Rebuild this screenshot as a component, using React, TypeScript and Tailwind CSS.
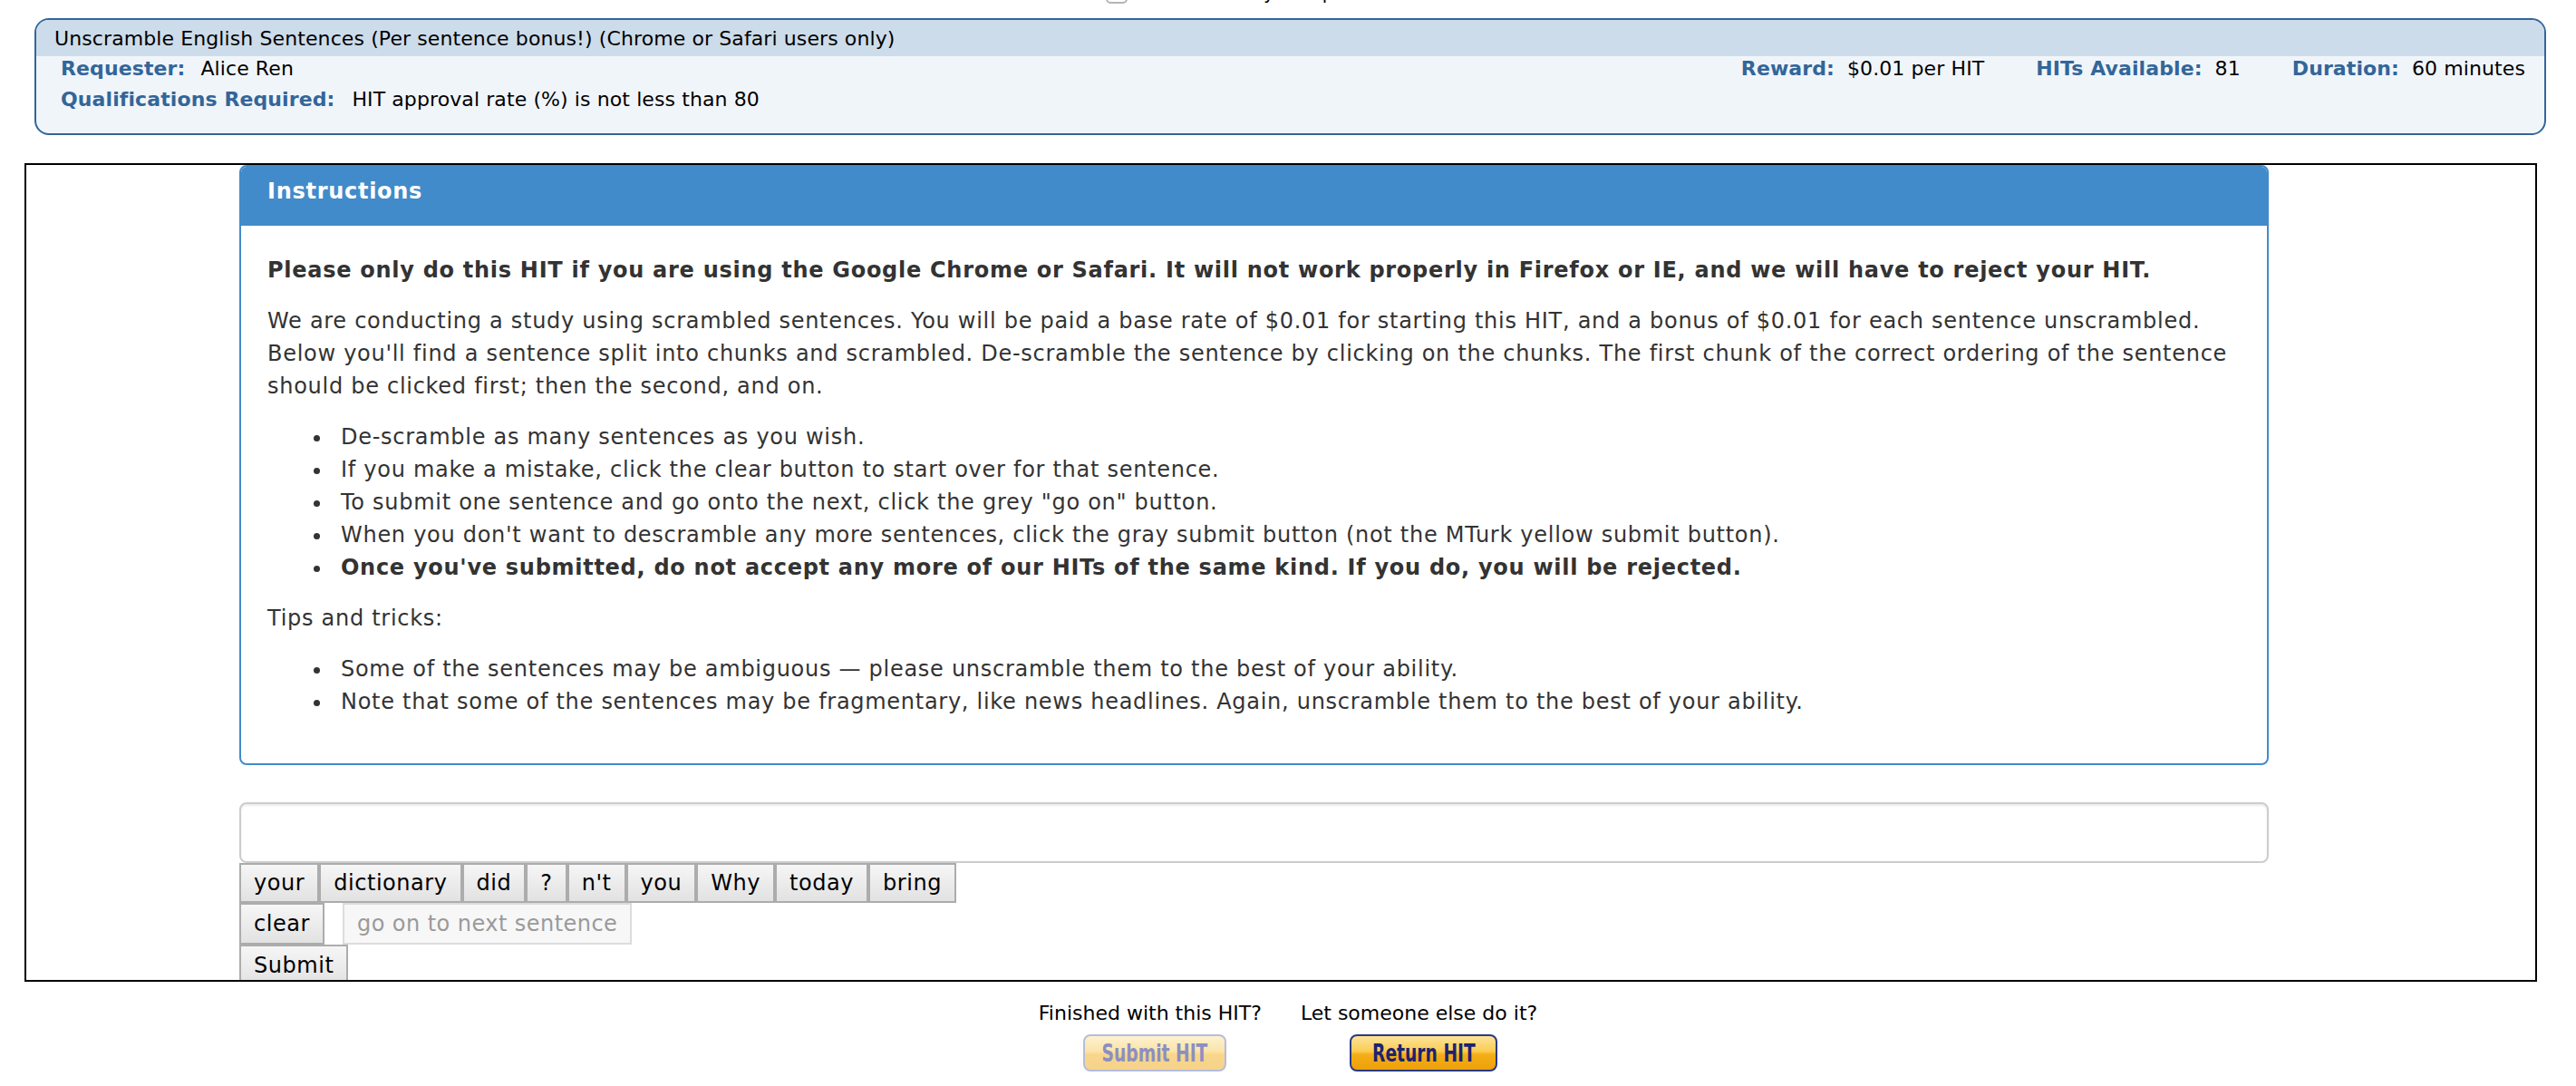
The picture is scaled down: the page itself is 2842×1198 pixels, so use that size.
const chunks = ["your", "dictionary", "did", "?", "n't", "you", "Why", "today", "bring"];

const rules = [
  "De-scramble as many sentences as you wish.",
  "If you make a mistake, click the clear button to start over for that sentence.",
  'To submit one sentence and go onto the next, click the grey "go on" button.',
  "When you don't want to descramble any more sentences, click the gray submit button (not the MTurk yellow submit button).",
];

const tips = [
  "Some of the sentences may be ambiguous — please unscramble them to the best of your ability.",
  "Note that some of the sentences may be fragmentary, like news headlines. Again, unscramble them to the best of your ability.",
];

function ChunkButton({ label, tall }: { label: string; tall?: boolean }) {
  return (
    <button
      className={`${tall ? "h-[46px]" : "h-[44px]"} px-[14px] border-2 border-[#acacac] bg-gradient-to-b from-[#f6f6f6] to-[#e2e2e2] text-[24px] leading-[28px] tracking-[0.55px] text-black`}
    >
      {label}
    </button>
  );
}

function Bullet({ children, bold }: { children: React.ReactNode; bold?: boolean }) {
  return (
    <li className={`flex ${bold ? "font-bold" : ""}`}>
      <span className="w-[30px] h-[36px] shrink-0 flex items-center">
        <span className="w-[7px] h-[7px] mt-[3px] rounded-full bg-[#333333]" />
      </span>
      <span>{children}</span>
    </li>
  );
}

function HitInfo() {
  return (
    <div className="ml-[38px] w-[2771px] border-2 border-[#336699] rounded-[16px] overflow-hidden bg-[#f0f5fa] text-[22px] tracking-[0.1px] text-black">
      {/* Title strip */}
      <div className="h-[40px] bg-[#cddcea] flex items-center pl-[20px]">
        Unscramble English Sentences (Per sentence bonus!) (Chrome or Safari users only)
      </div>

      <div className="flex justify-between pl-[27px] pr-[21px] mt-[2px] leading-[24px]">
        <div>
          <span className="font-bold text-[#336699]">Requester:</span>
          <span className="ml-[17px]">Alice Ren</span>
        </div>
        <div className="flex gap-[57px]">
          <div>
            <span className="font-bold text-[#336699]">Reward:</span>
            <span className="ml-[14px]">$0.01 per HIT</span>
          </div>
          <div>
            <span className="font-bold text-[#336699]">HITs Available:</span>
            <span className="ml-[14px]">81</span>
          </div>
          <div>
            <span className="font-bold text-[#336699]">Duration:</span>
            <span className="ml-[14px]">60 minutes</span>
          </div>
        </div>
      </div>

      <div className="pl-[27px] mt-[10px] mb-[25px] leading-[24px]">
        <span className="font-bold text-[#336699]">Qualifications Required:</span>
        <span className="ml-[19px]">HIT approval rate (%) is not less than 80</span>
      </div>
    </div>
  );
}

function Instructions() {
  return (
    <div className="w-[2239px] border-2 border-[#428bca] rounded-[8px] overflow-hidden text-[24px] leading-[36px] tracking-[0.72px] text-[#333333]">
      <div className="h-[65px] bg-[#428bca] pl-[29px] pt-[9px] font-bold text-white">Instructions</div>
      <div className="pl-[29px] pt-[31px] pb-[30px] whitespace-nowrap">
        <p className="font-bold mb-[20px]">
          Please only do this HIT if you are using the Google Chrome or Safari. It will not work properly in
          Firefox or IE, and we will have to reject your HIT.
        </p>
        <p className="mb-[20px]">
          We are conducting a study using scrambled sentences. You will be paid a base rate of $0.01 for starting
          this HIT, and a bonus of $0.01 for each sentence unscrambled.
          <br />
          Below you'll find a sentence split into chunks and scrambled. De-scramble the sentence by clicking on the
          chunks. The first chunk of the correct ordering of the sentence
          <br />
          should be clicked first; then the second, and on.
        </p>
        <ul className="pl-[51px] mb-[20px]">
          {rules.map((r) => (
            <Bullet key={r}>{r}</Bullet>
          ))}
          <Bullet bold>
            Once you've submitted, do not accept any more of our HITs of the same kind. If you do, you will be
            rejected.
          </Bullet>
        </ul>
        <p className="mb-[20px]">Tips and tricks:</p>
        <ul className="pl-[51px] mb-[20px]">
          {tips.map((t) => (
            <Bullet key={t}>{t}</Bullet>
          ))}
        </ul>
      </div>
    </div>
  );
}

export default function App() {
  return (
    <div className="min-h-screen bg-white font-['DejaVu_Sans','Open_Sans',sans-serif]">
      {/* auto-accept row, mostly scrolled out of view */}
      <div className="h-[20px] flex items-start pl-[1220px] overflow-hidden">
        <div className="-mt-[20px] flex items-end gap-[24px] text-[20px] leading-[24px] text-black">
          <span className="w-[24px] h-[24px] rounded-[5px] border-2 border-[#b5b5b5] bg-white" />
          <span>Automatically accept the next HIT</span>
        </div>
      </div>

      <HitInfo />

      {/* HIT frame */}
      <div className="mt-[31px] ml-[27px] w-[2772px] h-[903px] border-2 border-black overflow-hidden">
        <div className="ml-[235px]">
          <Instructions />

          <div className="mt-[41px] w-[2239px] h-[67px] border-2 border-[#cccccc] rounded-[8px] shadow-[inset_0_2px_2px_rgba(0,0,0,0.075)]" />

          <div className="flex">
            {chunks.map((c) => (
              <ChunkButton key={c} label={c} />
            ))}
          </div>

          <div className="flex">
            <ChunkButton label="clear" tall />
            <button className="ml-[20px] h-[46px] px-[14px] border-2 border-[#dcdcdc] bg-[#f7f7f7] text-[24px] leading-[28px] tracking-[0.45px] text-[#9a9a9a]">
              go on to next sentence
            </button>
          </div>

          <div className="flex">
            <ChunkButton label="Submit" tall />
          </div>
        </div>
      </div>

      {/* Submit / return */}
      <div className="flex justify-center gap-[43px] mt-[22px] text-[22px] leading-[26px] text-black">
        <div className="flex flex-col items-center">
          <span>Finished with this HIT?</span>
          <button className="mt-[10px] ml-[10px] w-[158px] h-[41px] rounded-[8px] border-2 border-[#b5bddb] bg-[linear-gradient(to_bottom,#fdf1d0_0%,#fbe4a8_45%,#f8d68a_55%,#f6d28c_100%)] font-bold text-[#8c8fc2]">
            <span className="inline-block scale-x-[0.77] text-[27px] leading-[30px] font-['DejaVu_Sans_Condensed','DejaVu_Sans',sans-serif] whitespace-nowrap">
              Submit HIT
            </span>
          </button>
        </div>
        <div className="flex flex-col items-center">
          <span>Let someone else do it?</span>
          <button className="mt-[10px] ml-[10px] w-[163px] h-[41px] rounded-[8px] border-2 border-[#2a3a80] bg-[linear-gradient(to_bottom,#fde39a_0%,#fbcc52_45%,#f4ae16_55%,#eda00c_100%)] font-bold text-[#1e2270]">
            <span className="inline-block scale-x-[0.77] text-[27px] leading-[30px] font-['DejaVu_Sans_Condensed','DejaVu_Sans',sans-serif] whitespace-nowrap">
              Return HIT
            </span>
          </button>
        </div>
      </div>
    </div>
  );
}
